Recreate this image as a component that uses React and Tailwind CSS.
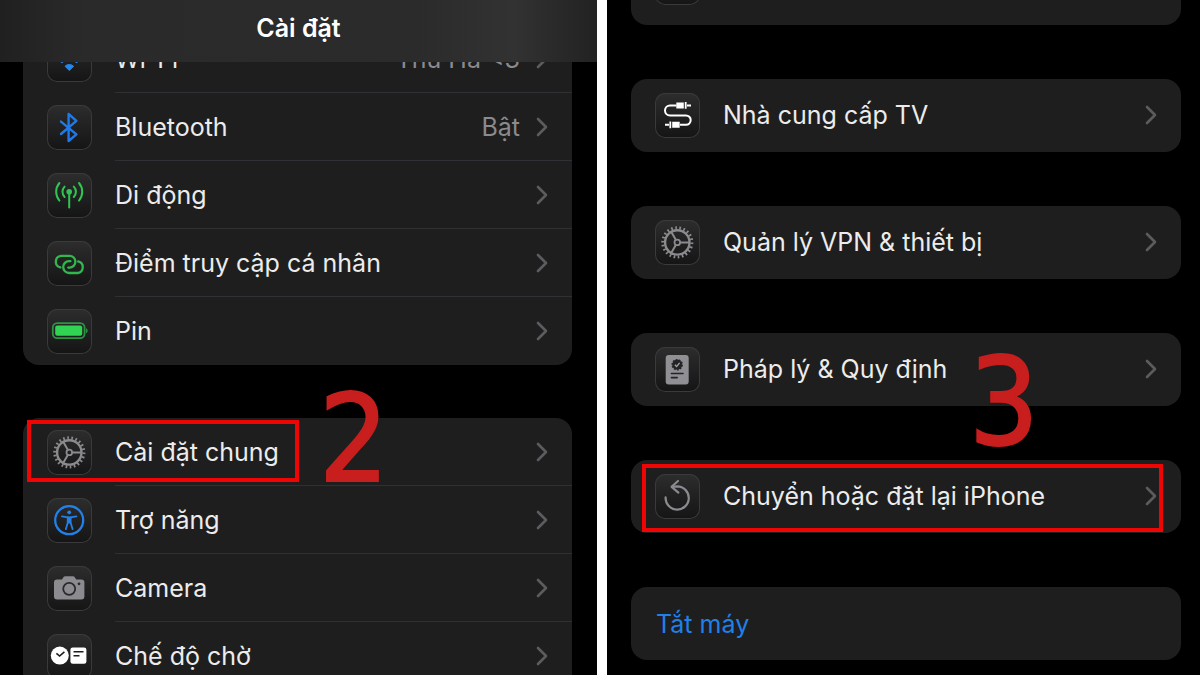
import clsx from 'clsx';

const icons = {
  wifi: (
    <g stroke="#2287f0" strokeWidth="3.4" fill="none">
      <path d="M8.500 19a19.500 19.500 0 0 1 27.600 0" />
      <path d="M13.600 25a12.500 12.500 0 0 1 17.400 0" />
      <path d="M22.3 33.600L18 29.200a6.200 6.200 0 0 1 8.600 0z" fill="#2287f0" strokeWidth="1" />
    </g>
  ),
  bluetooth: (
    <path
      d="M14 16.6L29.4 29.4L21.6 36V9L29.4 15.8L14 29"
      fill="none"
      stroke="#1f7ae8"
      strokeWidth="2.4"
      strokeLinejoin="round"
      strokeLinecap="round"
    />
  ),
  cellular: (
    <g stroke="#30c552" strokeWidth="2" fill="none" strokeLinecap="round">
      <path d="M22.2 19V34.5" />
      <circle cx="22.2" cy="18.8" r="1.8" fill="#30c552" />
      <path d="M17.6 13.6a7.4 7.4 0 0 0 0 10.4M26.8 13.6a7.4 7.4 0 0 1 0 10.4" />
      <path d="M12.4 10a13.6 13.6 0 0 0 0 17.6M32 10a13.6 13.6 0 0 1 0 17.6" />
    </g>
  ),
  hotspot: (
    <g stroke="#30b84e" strokeWidth="2.3" fill="none" strokeLinecap="round">
      <path d="M13.4 26.4a5.9 5.9 0 0 1 .6-11.6H22.5a5.9 5.9 0 0 1 0 11.8H21.2" />
      <path d="M31.2 20.4a5.9 5.9 0 0 1-.6 11.6H22.1a5.9 5.9 0 0 1 0-11.8H23.4" />
    </g>
  ),
  battery: (
    <g>
      <rect x="5.800" y="14.2" width="31.8" height="15" rx="4.4" fill="none" stroke="#2a9443" strokeWidth="1.8" />
      <rect x="8.2" y="16.6" width="27" height="10.2" rx="2" fill="#30d452" />
      <path d="M39 19.2c2.2.8 2.2 4.2 0 5z" fill="#2a9443" />
    </g>
  ),
  gear: (
    <g stroke="#8b8b8f" fill="none">
      <circle cx="22.3" cy="22.4" r="14.6" strokeWidth="3" pathLength="44" strokeDasharray="0.8 1.2" />
      <circle cx="22.3" cy="22.4" r="12.2" strokeWidth="2.4" />
      <circle cx="22.3" cy="22.4" r="2.8" strokeWidth="1.8" />
      <path d="M25.2 22.4H34M20.8 19.8L16.2 11.8M20.8 25L16.2 33" strokeWidth="2" />
    </g>
  ),
  accessibility: (
    <g stroke="#2280e8" fill="none" strokeLinecap="round" strokeLinejoin="round">
      <circle cx="22.2" cy="22.2" r="14" strokeWidth="2.3" />
      <circle cx="22.2" cy="14.3" r="1.9" fill="#2280e8" stroke="none" />
      <path d="M15 18.4L20.8 19.4H23.6L29.4 18.4" strokeWidth="1.8" />
      <path d="M20.8 19.4V24.4L18.8 31.2M23.6 19.4V24.4L25.6 31.2" strokeWidth="1.8" />
      <path d="M20.8 19.4H23.6V25H20.8z" fill="#2280e8" strokeWidth="1" />
    </g>
  ),
  camera: (
    <g>
      <path
        d="M10 13.4H15l1.6-2.4a2 2 0 0 1 1.6-.8H26a2 2 0 0 1 1.6.8l1.6 2.4H34.4a3 3 0 0 1 3 3V30.4a3 3 0 0 1-3 3H10a3 3 0 0 1-3-3V16.4a3 3 0 0 1 3-3z"
        fill="#8b8b90"
      />
      <circle cx="22.2" cy="22.8" r="6" fill="none" stroke="#2a2a2c" strokeWidth="1.8" />
      <circle cx="32" cy="17.8" r="1.4" fill="#2a2a2c" />
    </g>
  ),
  standby: (
    <g>
      <circle cx="12.8" cy="21.6" r="9" fill="#fff" />
      <path d="M9.400 19.400L12.6 22L17.400 17.800" fill="none" stroke="#1d1d1d" strokeWidth="1.6" />
      <rect x="23.4" y="13.4" width="16" height="16.4" rx="2.4" fill="#fff" />
      <path d="M26.500 17.8H36.500M26.500 21.8H32.500" stroke="#1d1d1d" strokeWidth="1.6" />
    </g>
  ),
  tv: (
    <g stroke="#fff" fill="none" strokeWidth="2">
      <path d="M21.5 12.4H15a5 5 0 0 0 0 10H31a4.7 4.7 0 0 1 0 9.4H25" />
      <path d="M32 12.4H36M10 31.8H14" />
      <path d="M30.7 9V15.8M15.3 28.4V35.2" strokeWidth="1.8" />
      <path d="M21.3 9.4H28.8V15.4H21.3zM17.2 28.8H24.7V34.8H17.2z" fill="#fff" stroke="none" />
    </g>
  ),
  legal: (
    <g>
      <rect x="10.7" y="8" width="23" height="29.4" rx="3" fill="#8f8f94" />
      <circle cx="22.2" cy="17.7" r="4.9" fill="#242426" />
      <circle cx="22.2" cy="17.7" r="5" fill="none" stroke="#242426" strokeWidth="1.5" pathLength="20" strokeDasharray="1.2 0.8" />
      <path d="M19.9 17.8L21.6 19.6L24.6 15.8" fill="none" stroke="#a5a5aa" strokeWidth="1.3" />
      <path d="M16.4 26.5H28M16.4 30.6H22.2" stroke="#242426" strokeWidth="1.6" strokeLinecap="round" />
    </g>
  ),
  reset: (
    <g stroke="#8b8b8f" strokeWidth="2.2" fill="none" strokeLinecap="round" strokeLinejoin="round">
      <path d="M10.6 23.4A11.6 11.6 0 1 0 22.2 12.4L17 12.8" />
      <path d="M23 7L16.6 12.8L23.4 18.6" />
    </g>
  ),
};

const network = [
  { icon: 'wifi', label: 'Wi-Fi', value: 'Thu Hà <3' },
  { icon: 'bluetooth', label: 'Bluetooth', value: 'Bật' },
  { icon: 'cellular', label: 'Di động' },
  { icon: 'hotspot', label: 'Điểm truy cập cá nhân' },
  { icon: 'battery', label: 'Pin' },
];

const general = [
  { icon: 'gear', label: 'Cài đặt chung', marked: true },
  { icon: 'accessibility', label: 'Trợ năng' },
  { icon: 'camera', label: 'Camera' },
  { icon: 'standby', label: 'Chế độ chờ' },
];

const sections = [
  { icon: 'tv', label: 'Nhà cung cấp TV' },
  { icon: 'gear', label: 'Quản lý VPN & thiết bị' },
  { icon: 'legal', label: 'Pháp lý & Quy định', step: '3' },
  { icon: 'reset', label: 'Chuyển hoặc đặt lại iPhone', marked: true },
];

function Tile({ name }) {
  return (
    <span className="block size-[45px] shrink-0 overflow-hidden rounded-[10px] bg-linear-to-b from-[#2d2d2d] to-[#151515] ring-1 ring-inset ring-[#3a3a3b]">
      <svg viewBox="0 0 45 45" className="size-full" aria-hidden="true">
        {icons[name]}
      </svg>
    </span>
  );
}

function Chevron() {
  return (
    <svg viewBox="0 0 12 20" className="h-5 w-3 shrink-0" aria-hidden="true">
      <path
        d="M2 2L10 10L2 18"
        fill="none"
        stroke="#5c5c60"
        strokeWidth="2.6"
        strokeLinecap="round"
        strokeLinejoin="round"
      />
    </svg>
  );
}

function Step({ children, className }) {
  return (
    <span
      className={clsx(
        "pointer-events-none absolute z-20 font-['DejaVu_Sans_Condensed','DejaVu_Sans',sans-serif] text-[122px] leading-none text-[#c81e1e] [-webkit-text-stroke:2px_#c81e1e]",
        className,
      )}
    >
      {children}
    </span>
  );
}

function Row({ icon, label, value, last }) {
  return (
    <button type="button" className="flex h-full w-full items-center pl-6 text-left">
      <Tile name={icon} />
      <span
        className={clsx(
          'ml-[23px] flex h-full flex-1 items-center border-b pr-6',
          last ? 'border-transparent' : 'border-[#303034]',
        )}
      >
        <span className="flex-1 whitespace-nowrap">{label}</span>
        {value && <span className="mr-4 whitespace-nowrap text-[#8a8a8f]">{value}</span>}
        <Chevron />
      </span>
    </button>
  );
}

function Group({ rows, children }) {
  return (
    <div className="relative">
      <ul className="rounded-2xl bg-[#1e1e1e]">
        {rows.map((row, i) => (
          <li key={row.label} className="relative h-[68px]">
            <Row {...row} last={i === rows.length - 1} />
            {row.marked && (
              <span className="pointer-events-none absolute top-0.5 bottom-1 left-1 w-[272px] border-4 border-[#f00505]" />
            )}
          </li>
        ))}
      </ul>
      {children}
    </div>
  );
}

export default function App() {
  return (
    <main className="flex h-screen gap-[10px] overflow-hidden bg-white font-['Inter','Liberation_Sans',sans-serif] text-[25px] leading-8 text-[#ececec]">
      <section className="relative min-w-0 flex-[597] overflow-hidden bg-black">
        <header className="absolute inset-x-0 top-0 z-10 flex h-[62px] items-center justify-center bg-[linear-gradient(to_right,#202020,#2a2a2a_14%,#2b2b2b_70%,#323232_86%,#222222)] pb-1.5">
          <h1 className="font-semibold text-white">Cài đặt</h1>
        </header>
        <div className="flex flex-col gap-[53px] pt-[25px] pr-[25px] pl-[23px]">
          <Group rows={network} />
          <Group rows={general}>
            <Step className="-top-10 left-[296px]">2</Step>
          </Group>
        </div>
      </section>

      <section className="min-w-0 flex-[593] overflow-hidden bg-black">
        <div className="-mt-12 flex flex-col gap-[54px] pr-[19px] pl-6">
          <div className="h-[73px] rounded-2xl bg-[#1e1e1e] pt-2 pl-6">
            <Tile />
          </div>
          {sections.map((row) => (
            <div key={row.label} className="relative h-[73px] rounded-2xl bg-[#1e1e1e]">
              <Row {...row} last />
              {row.marked && (
                <span className="pointer-events-none absolute top-1 right-[18px] bottom-px left-[11px] border-4 border-[#f00505]" />
              )}
              {row.step && <Step className="top-2 left-[338px]">{row.step}</Step>}
            </div>
          ))}
          <button type="button" className="h-[73px] rounded-2xl bg-[#1e1e1e] pl-[25px] text-left text-[#1f80e8]">
            Tắt máy
          </button>
        </div>
      </section>
    </main>
  );
}
